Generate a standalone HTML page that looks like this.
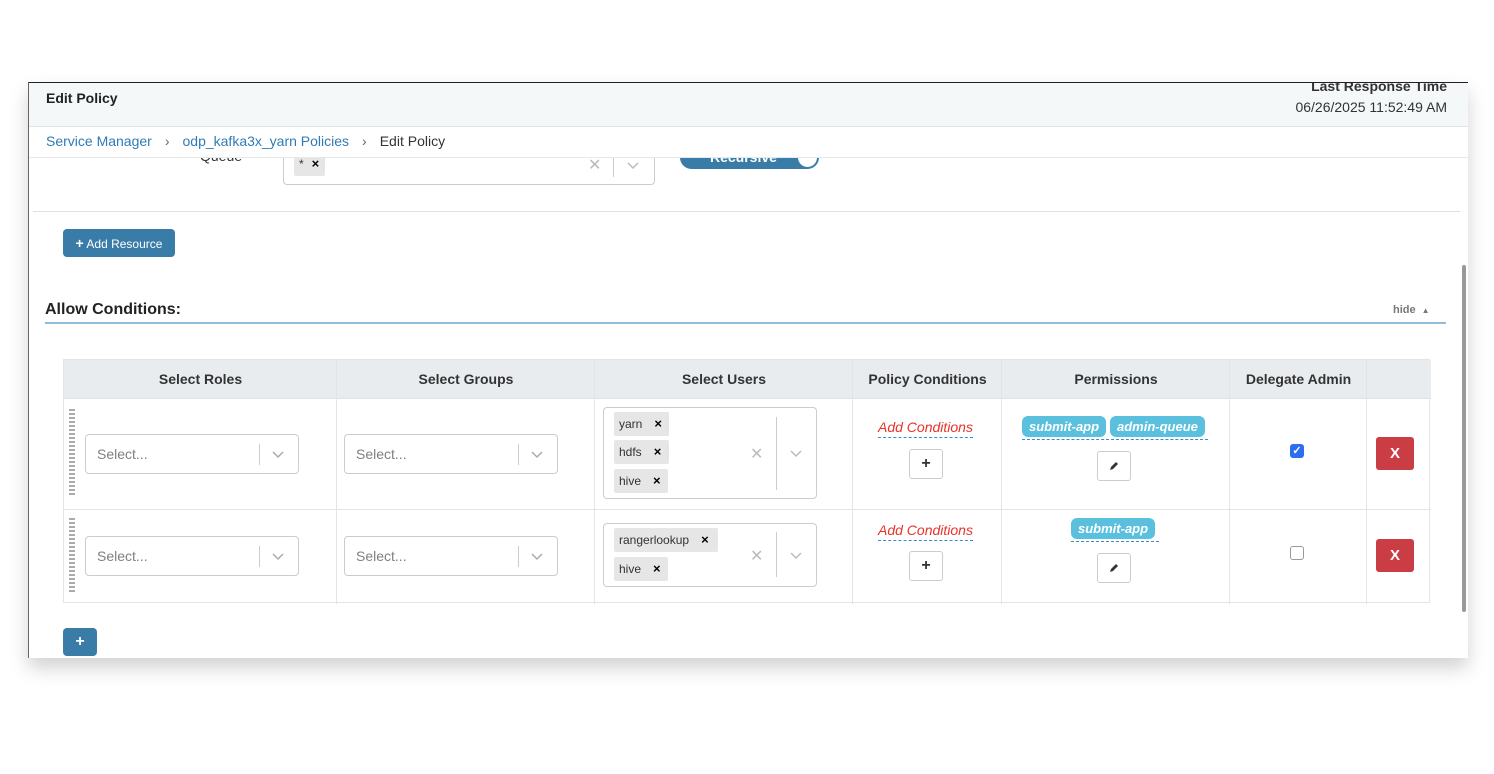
<!DOCTYPE html>
<html><head><meta charset="utf-8"><style>
*{box-sizing:border-box;margin:0;padding:0}
body{width:1494px;height:774px;background:#fff;font-family:"Liberation Sans",Arial,sans-serif;position:relative;overflow:hidden;color:#333}
.a{position:absolute}
.win{left:28px;top:82px;width:1440px;height:576px;border-top:1.5px solid #222;border-left:1px solid #666;background:#fff;box-shadow:0 10px 18px rgba(0,0,0,.18);overflow:hidden}
.sel{border:1px solid #ccc;border-radius:4px;background:#fff}
.ph{color:#808080;font-size:14px}
.chev{position:absolute;width:12px;height:8px}
.tag{position:absolute;background:#e6e6e6;border-radius:2px;font-size:12px;color:#333;height:24px;line-height:24px;padding-left:5px}
.tag b{font-size:13px;margin-left:8px;color:#000;font-weight:900}
.th{position:absolute;top:0;height:39px;line-height:39px;text-align:center;font-weight:bold;font-size:14px;color:#333}
.vl{position:absolute;width:1px;background:#e2e5e8}
.drag{position:absolute;width:6px;background:repeating-linear-gradient(#aaa 0 2px,transparent 2px 4px)}
.addc{position:absolute;color:#e8322b;font-style:italic;font-size:14px;border-bottom:1px dashed #3a8ad0;padding-bottom:2px}
.pbtn{position:absolute;width:34px;height:30px;border:1px solid #ccc;border-radius:3px;background:#fff;text-align:center;line-height:28px;font-weight:bold;font-size:16px;color:#333}
.perm{position:absolute;background:#5bc0de;color:#fff;font-weight:bold;font-style:italic;font-size:13px;height:21px;line-height:21px;padding:0 7px;border-radius:6px}
.del{position:absolute;width:38px;height:33px;background:#cb3d44;border-radius:3px;color:#fff;text-align:center;line-height:33px;font-weight:900;font-size:15px}
</style></head><body>
<div class="a win">
 <div class="a" style="left:0;top:0;width:1440px;height:44px;background:#f4f8f9;border-bottom:1px solid #dde3e6"></div>
 <div class="a" style="left:17px;top:7px;font-weight:bold;font-size:14px;color:#222">Edit Policy</div>
 <div class="a" style="right:21px;top:-5px;font-weight:bold;font-size:14px;color:#333">Last Response Time</div>
 <div class="a" style="right:21px;top:16px;font-size:14px;color:#333">06/26/2025 11:52:49 AM</div>
 <div class="a" style="left:17px;top:50px;font-size:14px;color:#333;white-space:nowrap"><span style="color:#2f7cb5">Service Manager</span><span style="margin:0 13px;color:#666">›</span><span style="color:#2f7cb5">odp_kafka3x_yarn Policies</span><span style="margin:0 13px;color:#666">›</span>Edit Policy</div>
 <div class="a" style="left:0;top:74px;width:1440px;height:1px;background:#e6e9eb"></div>
 <div class="a" style="left:0;top:75px;width:1440px;height:501px;overflow:hidden">
  <div class="a" style="left:-1px;top:-76px;width:1440px;height:576px">
   <div class="a" style="left:172px;top:66px;font-size:14px;color:#333">Queue</div>
   <div class="a sel" style="left:255px;top:66px;width:372px;height:37px"></div>
   <div class="tag" style="left:266px;top:70px;padding-right:6px">*<b>×</b></div>
   <div class="a" style="left:560px;top:73px;color:#bbb;font-size:16px">✕</div>
   <div class="a" style="left:585px;top:73px;width:1px;height:22px;background:#ccc"></div>
   <svg class="chev" style="left:599px;top:80px" viewBox="0 0 12 8"><path d="M1 1l5 5 5-5" fill="none" stroke="#bbb" stroke-width="1.5"/></svg>
   <div class="a" style="left:652px;top:64px;width:139px;height:23px;border-radius:12px;background:#3a7ca8;color:#fff;font-weight:bold;font-size:14px;line-height:22px;padding-left:30px">Recursive</div>
   <div class="a" style="left:770px;top:66px;width:19px;height:19px;border-radius:50%;background:#fff"></div>
   <div class="a" style="left:5px;top:129px;width:1427px;height:1px;background:#e0e0e0"></div>
   <div class="a" style="left:35px;top:147px;width:112px;height:28px;background:#3a7ca8;border-radius:4px;color:#fff;font-size:12px;line-height:28px;text-align:center"><b style="font-size:14px">+</b> Add Resource</div>
   <div class="a" style="left:17px;top:219px;font-weight:bold;font-size:16px;color:#222">Allow Conditions:</div>
   <div class="a" style="left:1365px;top:222px;font-weight:bold;font-size:11px;color:#777">hide <span style="font-size:8px;margin-left:3px">▲</span></div>
   <div class="a" style="left:17px;top:240px;width:1401px;height:2px;background:#8dbdd8"></div>
   <div class="a" style="left:35px;top:277px;width:1367px;height:244px;border:1px solid #e2e5e8">
    <div class="a" style="left:0;top:0;width:1367px;height:39px;background:#e9ecef;border-bottom:1px solid #dee2e6"></div>
    <div class="th" style="left:0;width:273px">Select Roles</div>
    <div class="th" style="left:273px;width:258px">Select Groups</div>
    <div class="th" style="left:531px;width:258px">Select Users</div>
    <div class="th" style="left:789px;width:149px">Policy Conditions</div>
    <div class="th" style="left:938px;width:228px">Permissions</div>
    <div class="th" style="left:1166px;width:137px">Delegate Admin</div>
    <div class="vl" style="left:272px;top:0;height:244px"></div>
    <div class="vl" style="left:530px;top:0;height:244px"></div>
    <div class="vl" style="left:788px;top:0;height:244px"></div>
    <div class="vl" style="left:937px;top:0;height:244px"></div>
    <div class="vl" style="left:1165px;top:0;height:244px"></div>
    <div class="vl" style="left:1302px;top:0;height:244px"></div>
    <div class="a" style="left:0;top:149px;width:1367px;height:1px;background:#e2e5e8"></div>
   </div>
   <div class="drag" style="left:41px;top:327px;height:88px"></div>
   <div class="a sel" style="left:57px;top:352px;width:214px;height:40px"><span class="a ph" style="left:11px;top:11px">Select...</span><span class="a" style="left:173px;top:9px;width:1px;height:21px;background:#ccc"></span><svg class="chev" style="left:186px;top:16px" viewBox="0 0 12 8"><path d="M1 1l5 5 5-5" fill="none" stroke="#aaa" stroke-width="1.5"/></svg></div>
   <div class="a sel" style="left:316px;top:352px;width:214px;height:40px"><span class="a ph" style="left:11px;top:11px">Select...</span><span class="a" style="left:173px;top:9px;width:1px;height:21px;background:#ccc"></span><svg class="chev" style="left:186px;top:16px" viewBox="0 0 12 8"><path d="M1 1l5 5 5-5" fill="none" stroke="#aaa" stroke-width="1.5"/></svg></div>
   <div class="a sel" style="left:575px;top:325px;width:214px;height:92px"></div>
   <div class="tag" style="left:586px;top:330px;width:55px">yarn<b style="margin-left:12px">×</b></div>
   <div class="tag" style="left:586px;top:358px;width:55px">hdfs<b style="margin-left:12px">×</b></div>
   <div class="tag" style="left:586px;top:387px;width:54px">hive<b style="margin-left:12px">×</b></div>
   <div class="a" style="left:722px;top:362px;color:#bbb;font-size:16px">✕</div>
   <div class="a" style="left:748px;top:335px;width:1px;height:73px;background:#ccc"></div>
   <svg class="chev" style="left:762px;top:368px" viewBox="0 0 12 8"><path d="M1 1l5 5 5-5" fill="none" stroke="#bbb" stroke-width="1.5"/></svg>
   <div class="addc" style="left:850px;top:337px">Add Conditions</div>
   <div class="pbtn" style="left:881px;top:367px">+</div>
   <div class="perm" style="left:994px;top:334px">submit-app</div>
   <div class="perm" style="left:1082px;top:334px">admin-queue</div>
   <div class="a" style="left:994px;top:357px;width:186px;border-bottom:1px dashed #3a8ad0"></div>
   <div class="pbtn" style="left:1069px;top:369px"><svg width="10" height="10" viewBox="0 0 10 10" style="margin-top:9px"><path d="M1 9l1-3 5-5 2 2-5 5z" fill="#333"/></svg></div>
   <div class="a" style="left:1262px;top:362px;width:14px;height:14px;border-radius:3px;background:#2e6ff0;color:#fff;font-size:11px;line-height:14px;text-align:center;font-weight:bold">✓</div>
   <div class="del" style="left:1348px;top:355px">X</div>
   <div class="drag" style="left:41px;top:436px;height:75px"></div>
   <div class="a sel" style="left:57px;top:454px;width:214px;height:40px"><span class="a ph" style="left:11px;top:11px">Select...</span><span class="a" style="left:173px;top:9px;width:1px;height:21px;background:#ccc"></span><svg class="chev" style="left:186px;top:16px" viewBox="0 0 12 8"><path d="M1 1l5 5 5-5" fill="none" stroke="#aaa" stroke-width="1.5"/></svg></div>
   <div class="a sel" style="left:316px;top:454px;width:214px;height:40px"><span class="a ph" style="left:11px;top:11px">Select...</span><span class="a" style="left:173px;top:9px;width:1px;height:21px;background:#ccc"></span><svg class="chev" style="left:186px;top:16px" viewBox="0 0 12 8"><path d="M1 1l5 5 5-5" fill="none" stroke="#aaa" stroke-width="1.5"/></svg></div>
   <div class="a sel" style="left:575px;top:441px;width:214px;height:64px"></div>
   <div class="tag" style="left:586px;top:446px;width:104px">rangerlookup<b style="margin-left:12px">×</b></div>
   <div class="tag" style="left:586px;top:475px;width:54px">hive<b style="margin-left:12px">×</b></div>
   <div class="a" style="left:722px;top:464px;color:#bbb;font-size:16px">✕</div>
   <div class="a" style="left:748px;top:450px;width:1px;height:45px;background:#ccc"></div>
   <svg class="chev" style="left:762px;top:470px" viewBox="0 0 12 8"><path d="M1 1l5 5 5-5" fill="none" stroke="#bbb" stroke-width="1.5"/></svg>
   <div class="addc" style="left:850px;top:440px">Add Conditions</div>
   <div class="pbtn" style="left:881px;top:469px">+</div>
   <div class="perm" style="left:1043px;top:436px">submit-app</div>
   <div class="a" style="left:1043px;top:459px;width:88px;border-bottom:1px dashed #3a8ad0"></div>
   <div class="pbtn" style="left:1069px;top:471px"><svg width="10" height="10" viewBox="0 0 10 10" style="margin-top:9px"><path d="M1 9l1-3 5-5 2 2-5 5z" fill="#333"/></svg></div>
   <div class="a" style="left:1262px;top:464px;width:14px;height:14px;border-radius:3px;border:1px solid #999;background:#fff"></div>
   <div class="del" style="left:1348px;top:457px">X</div>
   <div class="a" style="left:35px;top:546px;width:34px;height:28px;background:#3a7ca8;border-radius:4px;color:#fff;text-align:center;line-height:28px;font-weight:bold;font-size:16px">+</div>
   <div class="a" style="left:1434px;top:183px;width:4px;height:347px;background:#999;border-radius:2px"></div>
  </div>
 </div>
</div>
</body></html>
